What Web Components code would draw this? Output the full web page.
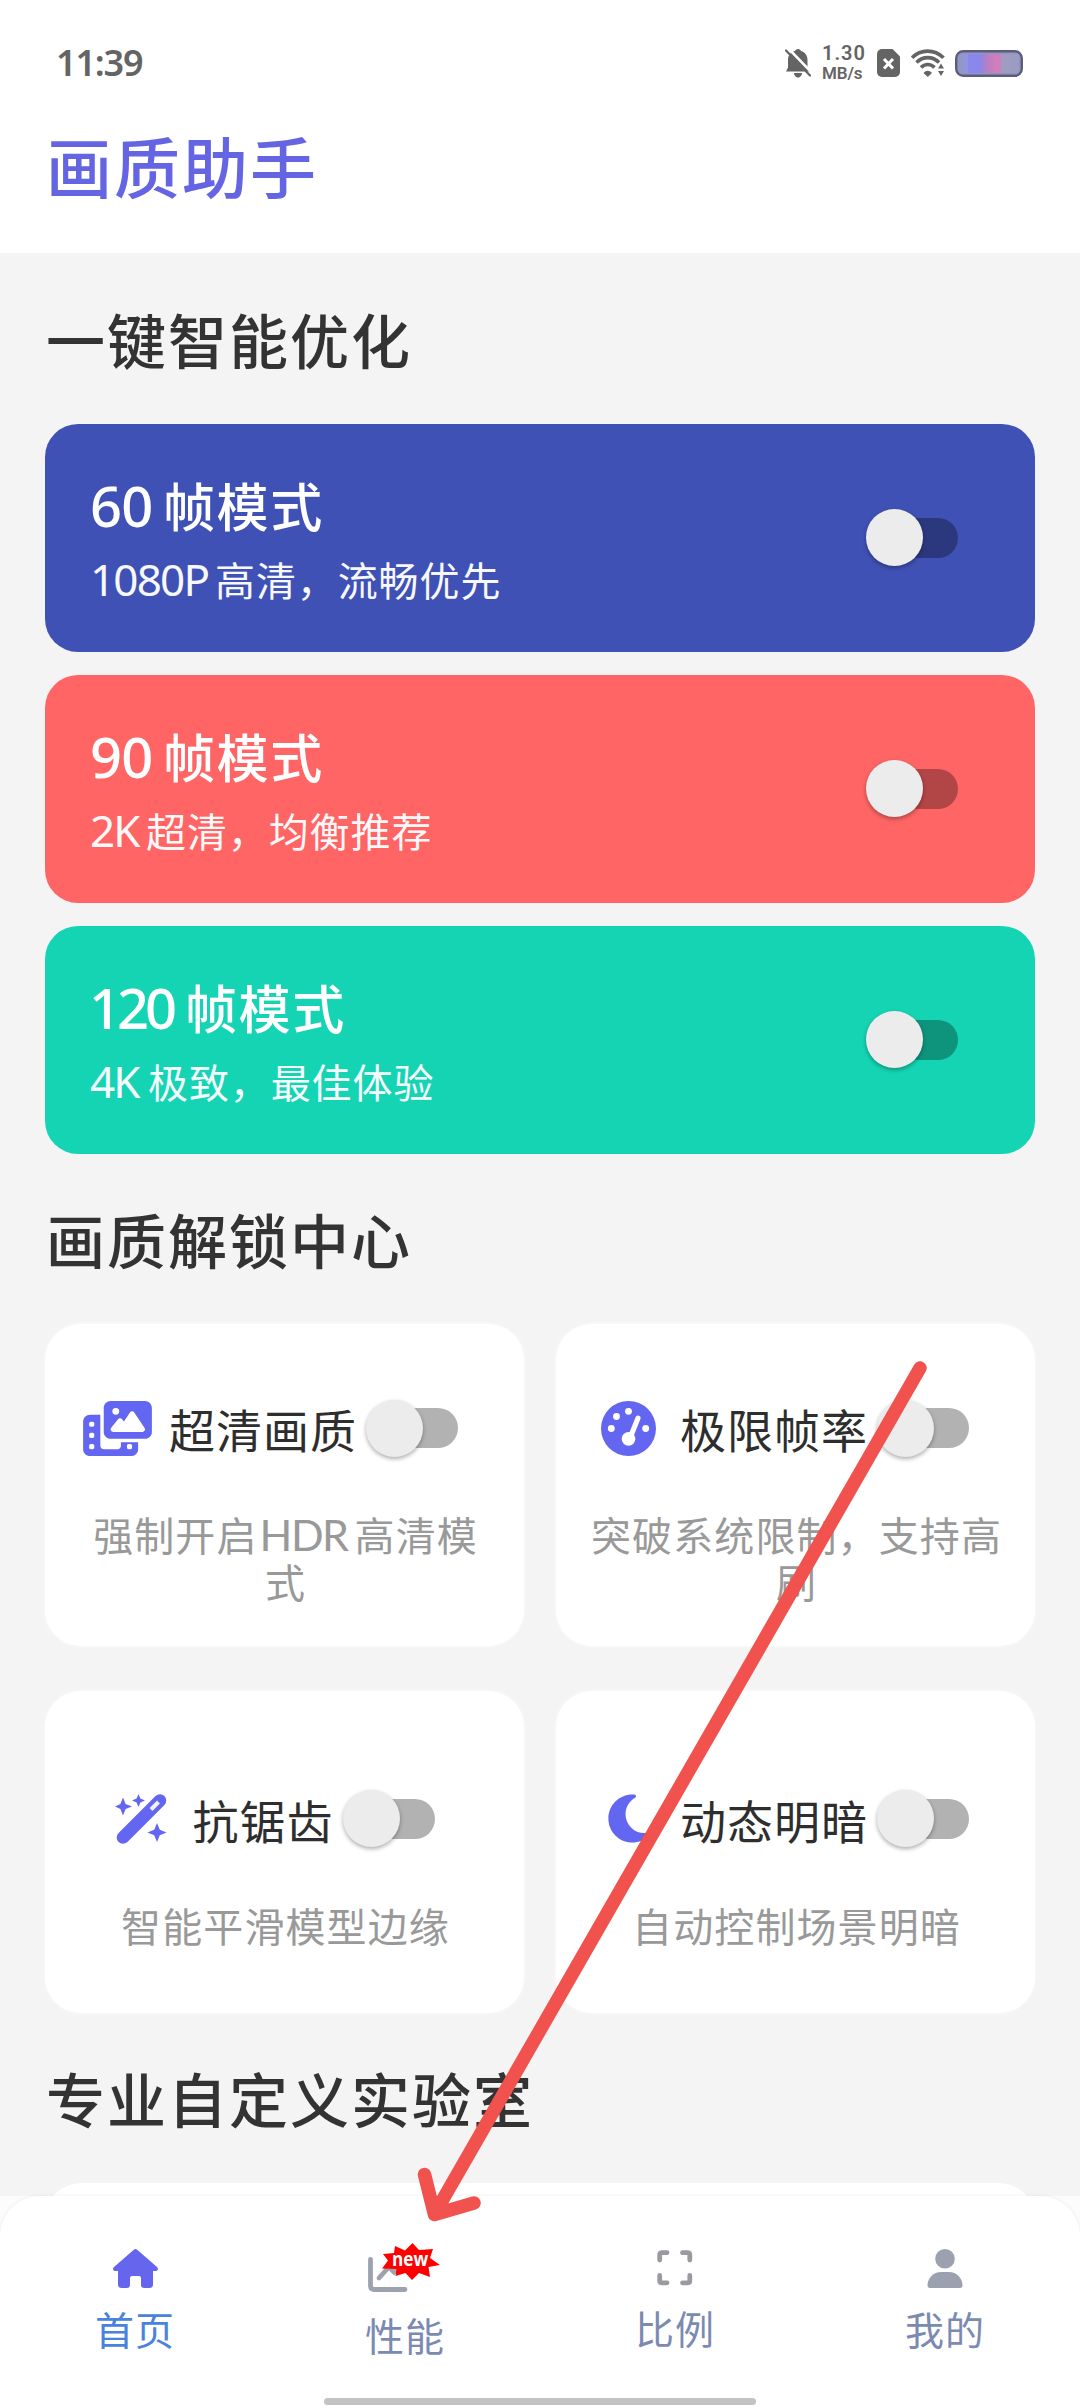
<!DOCTYPE html>
<html lang="zh-CN">
<head>
<meta charset="utf-8">
<title>画质助手</title>
<style>
html,body{margin:0;padding:0}
body{width:1080px;height:2408px;overflow:hidden;background:#f4f4f4;font-family:"Noto Sans CJK SC","Noto Sans",sans-serif;color:#333}
</style>
</head>
<body>
<quality-app></quality-app>
<script>
const define = (name, html) => {
  const t = document.createElement('template');
  t.innerHTML = html;
  customElements.define(name, class extends HTMLElement {
    constructor() {
      super();
      this.attachShadow({mode: 'open'}).append(t.content.cloneNode(true));
    }
  });
};

/* Status bar */
define('status-bar', `
<style>
:host{display:flex;height:126px;box-sizing:border-box;padding:0 57px 0 56px;justify-content:space-between;align-items:center;color:#646464}
.time{font:600 36px/40px "Noto Sans",sans-serif;letter-spacing:-1.200px}
.right{display:flex;align-items:center}
svg{display:block}
.speed{display:flex;flex-direction:column;font-family:Roboto,"Noto Sans",sans-serif;font-weight:600;width:54px;box-sizing:border-box;padding-left:11px}
.speed span{white-space:nowrap}
.a{font-size:20px;line-height:20px;letter-spacing:1px}
.b{font-size:17px;line-height:20px;letter-spacing:-.1px}
</style>
<span class="time">11:39</span>
<div class="right">
<svg width="26" height="29" viewBox="0 0 26 29"><path d="M13 0c1.600 0 2.600 1 3 2 4 1 6.500 4.500 6.500 9v8l2 3.500H1l2-4V11c0-4.500 2.500-8 7-9 .4-1 1.400-2 3-2z" fill="#646464"/><path d="M9 24h8c0 2-1.500 4.500-4 4.500S9 26 9 24z" fill="#646464"/><path d="M2.500-1.500l25 26" stroke="#fff" stroke-width="2.600"/><path d="M1 1.500l24 25" stroke="#646464" stroke-width="2.200" stroke-linecap="round"/></svg>
<div class="speed"><span class="a">1.30</span><span class="b">MB/s</span></div>
<svg style="margin-left:12px" width="24" height="28" viewBox="0 0 24 28"><path d="M5 0h10.500L23 7.500V23a5 5 0 0 1-5 5H5a5 5 0 0 1-5-5V5a5 5 0 0 1 5-5z" fill="#646464"/><path d="M7 10l9 9.500M16 10l-9 9.500" stroke="#fff" stroke-width="3"/></svg>
<svg style="margin-left:10px" width="35" height="28" viewBox="0 0 35 28"><g fill="none" stroke="#646464" stroke-width="3.700"><path d="M1 8.800c8.500-9 22.500-9 31.500 0"/><path d="M5.500 13.500c6.500-6.500 16-6.500 22.500 0"/><path d="M10 18.500c4-4 9.500-4 13.500 0"/></g><path d="M12.500 24c2.500-3 6-3 8.500 0l-4.200 4z" fill="#646464"/><path d="M25.500 19.500l4.500-8 4.500 8v8h-9z" fill="#fff"/><path d="M27 19.500h6l-3-5zM27 22h6l-3 5z" fill="#646464"/></svg>
<svg style="margin-left:9px" width="68" height="27" viewBox="0 0 68 27"><defs><linearGradient id="g"><stop offset="0" stop-color="#9197c6"/><stop offset=".14" stop-color="#9295dc"/><stop offset=".15" stop-color="#8788ee"/><stop offset=".36" stop-color="#8b86e9"/><stop offset=".4" stop-color="#9b83dd"/><stop offset=".44" stop-color="#b27fc9"/><stop offset=".62" stop-color="#d17eba"/><stop offset=".69" stop-color="#d17eba"/><stop offset=".7" stop-color="#a29bc4"/><stop offset="1" stop-color="#999dbf"/></linearGradient></defs><rect x="1.200" y="1.200" width="65.600" height="24.600" rx="7" fill="#9296be" stroke="#5c5d7d" stroke-width="2.400"/><rect x="4" y="4" width="60" height="19" rx="4" fill="url(#g)"/></svg>
</div>`);

/* Header with the app's name */
define('app-header', `
<style>
:host{display:block;height:253px;background:#fff}
h1{margin:0;padding-left:46px;font-size:66px;line-height:77px;font-weight:500;letter-spacing:2px;color:#6565e3}
</style>
<status-bar></status-bar><h1><slot></slot></h1>`);

define('section-title', `
<style>
:host{display:flex;height:170px;align-items:center;padding-left:46px;font-size:59px;line-height:72px;font-weight:500;letter-spacing:2px;color:#333;white-space:nowrap}
</style><slot></slot>`);

/* Switch, off position */
define('toggle-switch', `
<style>
:host{display:flex;width:92px;height:57px;align-items:center;flex:none}
.track{width:76px;height:40px;margin-left:16px;border-radius:20px;background:rgba(0,0,0,.3);display:flex;align-items:center}
.knob{flex:none;width:57px;height:57px;margin-left:-16px;border-radius:50%;background:#ececec;box-shadow:0 2px 4px rgba(0,0,0,.32)}
</style><div class="track"><div class="knob"></div></div>`);

/* Run of Latin text or digits inside Chinese text */
define('latin-run', `
<style>
:host{display:inline-block;font-family:"Noto Sans",sans-serif;line-height:1;white-space:nowrap;text-align:left}
</style><slot></slot>`);

define('mode-card', `
<style>
:host{display:flex;box-sizing:border-box;height:228px;border-radius:33px;padding:8px 77px 0 45px;color:#fff;align-items:center;justify-content:space-between;background:var(--bg)}
.text{display:flex;flex-direction:column}
.t{font-size:52px;line-height:74px;height:74px;font-weight:500;letter-spacing:1.600px;white-space:nowrap}
.s{font-size:40px;line-height:74px;height:74px;letter-spacing:.9px;white-space:nowrap;opacity:.96}
toggle-switch{margin-bottom:9px}
</style>
<div class="text"><div class="t"><slot name="title"></slot></div><div class="s"><slot></slot></div></div><toggle-switch></toggle-switch>`);

define('feature-card', `
<style>
:host{display:flex;flex-direction:column;align-items:center;justify-content:center;box-sizing:border-box;height:322px;padding-top:18px;border-radius:36px;background:#fff;box-shadow:0 0 4px rgba(255,255,255,.7)}
.row{display:flex;align-items:center;height:90px;margin-right:1px}
.icon{width:69px;height:57px;display:flex;align-items:center;justify-content:center;margin-right:17px;color:#6366f1}
.name{font-size:46px;line-height:60px;letter-spacing:1px;color:#2e2e2e;white-space:nowrap;margin-right:9px}
toggle-switch{margin-right:27px}
.desc{width:416px;text-align:center;font-size:40px;line-height:47px;letter-spacing:1.100px;color:#999;padding-top:38px;margin-left:2px}
</style>
<div class="row"><div class="icon"><slot name="icon"></slot></div><div class="name"><slot name="name"></slot></div><toggle-switch></toggle-switch></div>
<div class="desc"><slot></slot></div>`);

define('nav-item', `
<style>
:host{display:flex;flex-direction:column;align-items:center;width:270px;color:#7c8ab2;font-size:39px;line-height:50px;letter-spacing:.9px}
.icon{height:55px;display:flex;align-items:flex-end;justify-content:center}
.label{padding-top:15px;white-space:nowrap}
</style><div class="icon"><slot name="icon"></slot></div><div class="label"><slot></slot></div>`);

/* Chart icon with its starburst badge */
define('chart-new', `
<style>
:host{display:block;position:relative;width:74px;height:52px}
svg{display:block}
.badge{position:absolute;left:14px;top:0;width:58px;height:37px;display:flex;align-items:center;justify-content:center}
.badge svg{position:absolute;left:0;top:0}
.badge span{position:relative;font:700 20px/22px "Open Sans","Noto Sans",sans-serif;letter-spacing:0;color:#fff;margin-top:-6px;margin-left:-1px;transform:scaleX(.86)}
</style>
<svg width="74" height="52" viewBox="0 0 74 52"><path d="M2.500 16.500v26q0 4 4 4h30.500" fill="none" stroke="#9ca3af" stroke-width="4.800" stroke-linecap="round"/><path d="M11 35l10-11 5 5 11-12" fill="none" stroke="#9ca3af" stroke-width="4.800" stroke-linecap="round"/></svg>
<div class="badge"><svg width="58" height="37" viewBox="0 0 58 37"><path d="M30.500 0L37 7l14-1-3 9 10 7-11.500 2L48 34l-11-4-7 7-6.500-7-10 3 1-7L0 25.500l6-8L1 11l11-1 1-7 10 4.500z" fill="#fe0000"/></svg><span>new</span></div>`);

define('bottom-nav', `
<style>
:host{display:block;height:212px;background:#fcfcfc;position:relative}
.bar{height:212px;box-sizing:border-box;background:#fff;border-radius:40px 40px 0 0;box-shadow:0 0 4px rgba(0,0,0,.07);padding-top:37px;display:flex;flex-direction:column;justify-content:space-between;align-items:center}
.items{display:flex;width:1080px}
.home{width:432px;height:7px;border-radius:4px;background:#c3c3c3;margin-bottom:3px}
</style>
<div class="bar"><div class="items"><slot></slot></div><div class="home"></div></div>`);

/* Hand-drawn arrow lying over the page */
define('pointer-arrow', `
<style>
:host{position:absolute;left:0;top:0;width:1080px;height:2408px;pointer-events:none}
svg{display:block}
</style>
<svg width="1080" height="2408" viewBox="0 0 1080 2408"><path d="M920 1368L434.500 2214M424.500 2174.500L434.500 2214.500L474 2203" fill="none" stroke="#f1524d" stroke-width="13.500" stroke-linecap="round" stroke-linejoin="round"/></svg>`);

define('quality-app', `
<style>
:host{display:flex;flex-direction:column;position:relative;width:1080px;height:2408px;overflow:hidden;background:#f4f4f4}
main{height:1943px;overflow:hidden}
.modes{display:flex;flex-direction:column;gap:23px;padding:0 45px}
.grid{display:grid;grid-template-columns:479px 479px;gap:45px 32px;padding:0 45px}
.lab{height:120px;margin:0 45px;border-radius:36px;background:#fff}
svg{display:block}
.first{height:171px}
.t{font-size:56px;font-weight:500;letter-spacing:-.8px}
.s{font-size:44px;letter-spacing:-1.800px}
.h{font-family:Lato,"Noto Sans",sans-serif;width:97px;font-size:43px;letter-spacing:-1.500px;text-indent:2px}
</style>
<app-header>画质助手</app-header>
<main>
<section-title class="first">一键智能优化</section-title>
<div class="modes">
<mode-card style="--bg:#3f51b5"><span slot="title"><latin-run class="t" style="width:73px">60</latin-run>帧模式</span><latin-run class="s" style="width:125px">1080P</latin-run>高清，流畅优先</mode-card>
<mode-card style="--bg:#ff6565"><span slot="title"><latin-run class="t" style="width:73px">90</latin-run>帧模式</span><latin-run class="s" style="width:56px">2K</latin-run>超清，均衡推荐</mode-card>
<mode-card style="--bg:#15d4b4"><span slot="title"><latin-run class="t" style="width:95px;text-indent:-1px;letter-spacing:-4px">120</latin-run>帧模式</span><latin-run class="s" style="width:58px">4K</latin-run>极致，最佳体验</mode-card>
</div>
<section-title>画质解锁中心</section-title>
<div class="grid">
<feature-card><svg slot="icon" width="69" height="55" viewBox="0 0 640 512" fill="#6366f1"><path d="M256 0H576c35.300 0 64 28.700 64 64V288c0 35.300-28.700 64-64 64H256c-35.300 0-64-28.700-64-64V64c0-35.300 28.700-64 64-64zM476 106.700C471.500 100 464 96 456 96s-15.500 4-20 10.700l-56 84L362.700 169c-4.600-5.700-11.500-9-18.700-9s-14.200 3.300-18.700 9l-64 80c-5.800 7.200-6.900 17.100-2.900 25.400s12.400 13.600 21.600 13.600h80 48H552c8.900 0 17-4.900 21.200-12.700s3.700-17.300-1.200-24.600l-96-144zM336 96a32 32 0 1 0 -64 0 32 32 0 1 0 64 0zM64 128h96V384v32c0 17.700 14.300 32 32 32H320c17.700 0 32-14.300 32-32V384H512v64c0 35.300-28.700 64-64 64H64c-35.300 0-64-28.700-64-64V192c0-35.300 28.700-64 64-64zm8 64c-8.800 0-16 7.200-16 16v16c0 8.800 7.200 16 16 16H88c8.800 0 16-7.200 16-16V208c0-8.800-7.200-16-16-16H72zm0 104c-8.800 0-16 7.200-16 16v16c0 8.800 7.200 16 16 16H88c8.800 0 16-7.200 16-16V312c0-8.800-7.200-16-16-16H72zm0 104c-8.800 0-16 7.200-16 16v16c0 8.800 7.200 16 16 16H88c8.800 0 16-7.200 16-16V416c0-8.800-7.200-16-16-16H72zm336 16v16c0 8.800 7.200 16 16 16h16c8.800 0 16-7.200 16-16V416c0-8.800-7.200-16-16-16H424c-8.800 0-16 7.200-16 16z"/></svg><span slot="name">超清画质</span>强制开启<latin-run class="h">HDR</latin-run>高清模<span>式</span></feature-card>
<feature-card><svg slot="icon" width="55" height="55" viewBox="0 0 512 512"><circle cx="256" cy="256" r="256" fill="#6366f1"/><g fill="#fff"><circle cx="256" cy="96" r="32"/><circle cx="144" cy="144" r="32"/><circle cx="96" cy="256" r="32"/><circle cx="416" cy="256" r="32"/><circle cx="256" cy="352" r="64"/></g><path d="M344 160L272 340" stroke="#fff" stroke-width="48" stroke-linecap="round"/></svg><span slot="name">极限帧率</span>突破系统限制，支持高刷</feature-card>
<feature-card><svg slot="icon" width="52" height="50" viewBox="0 0 52 50"><g fill="#6366f1"><path d="M8 3.500l2.600 6.400 6.400 2.600-6.400 2.600L8 21.500l-2.600-6.400L0 12.500l5.400-2.600zM23.500 0l1.900 4.600L30 6.500l-4.600 1.900-1.900 4.600-1.900-4.600L17 6.500l4.600-1.900zM42 29l2.800 6.700 6.700 2.800-6.700 2.800L42 48l-2.800-6.700-6.700-2.800 6.700-2.800z"/></g><path d="M8 43.500L45 6.500" stroke="#6366f1" stroke-width="12.500" stroke-linecap="round"/><path d="M36 15.500L43.500 8" stroke="#f1f1ff" stroke-width="4"/></svg><span slot="name">抗锯齿</span>智能平滑模型边缘</feature-card>
<feature-card><svg slot="icon" width="42" height="55" viewBox="0 0 384 512" fill="#6366f1"><path d="M223.500 32C100 32 0 132.300 0 256S100 480 223.500 480c60.600 0 115.500-24.200 155.800-63.400c5-4.900 6.300-12.500 3.100-18.700s-10.100-9.700-17-8.500c-9.800 1.700-19.800 2.600-30.100 2.600c-96.900 0-175.500-78.800-175.500-176c0-65.800 36-123.100 89.300-153.300c6.100-3.500 9.200-10.500 7.700-17.300s-7.300-11.900-14.300-12.500c-6.300-.5-12.600-.8-19-.8z"/></svg><span slot="name">动态明暗</span>自动控制场景明暗</feature-card>
</div>
<section-title>专业自定义实验室</section-title>
<div class="lab"></div>
</main>
<bottom-nav>
<nav-item style="color:#4a83dc"><svg slot="icon" width="45" height="39" viewBox="0 0 45 39"><path d="M20.800.8q1.700-1.500 3.400 0L44 18q1.500 1.600.8 2.800-.6 1.200-2.300 1.200H40v13.500q0 3.500-3.500 3.500H31q-3 0-3-3.300V29q0-2-2-2h-7q-2 0-2 2v6.700q0 3.300-3 3.300H8.500Q5 39 5 35.500V22H2.500Q.8 22 .2 20.800-.5 19.600 1 18z" fill="#6565ee"/></svg>首页</nav-item>
<nav-item><chart-new slot="icon" style="margin-bottom:-7px"></chart-new><span style="position:relative;top:6px">性能</span></nav-item>
<nav-item><svg slot="icon" width="36" height="36" viewBox="0 0 36 36" style="margin-bottom:2px"><path d="M2.700 10V5q0-2.300 2.300-2.300h5M25.500 2.700h5q2.300 0 2.300 2.300v5M32.800 25.500v5q0 2.300-2.300 2.300h-5M10 32.800H5q-2.300 0-2.300-2.300v-5" fill="none" stroke="#999ba1" stroke-width="4.800" stroke-linecap="round"/></svg><span style="position:relative;top:-1px">比例</span></nav-item>
<nav-item><svg slot="icon" width="36" height="39" viewBox="0 0 36 39" fill="#9ca1b0"><circle cx="18" cy="9.800" r="9.800"/><path d="M14 23h8c7.500 0 13.500 6 13.500 13.500 0 1.500-1 2.500-2.300 2.500H2.800C1.500 39 .5 38 .5 36.500.5 29 6.500 23 14 23z"/></svg>我的</nav-item>
</bottom-nav>
<pointer-arrow></pointer-arrow>`);
</script>
</body>
</html>
